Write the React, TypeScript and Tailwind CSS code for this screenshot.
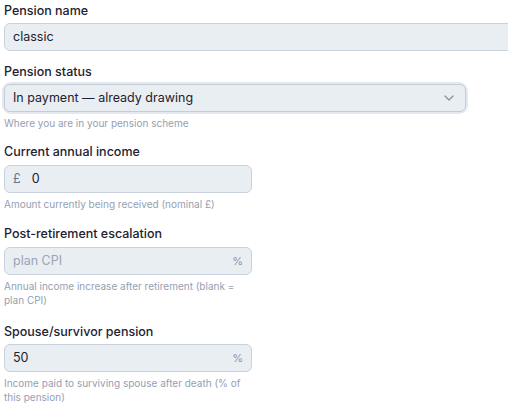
import { ChevronDown } from "lucide-react";

const font = { fontFamily: "Inter, 'Liberation Sans', sans-serif" };

function Label({ children }: { children: React.ReactNode }) {
  return <label className="block text-[12.5px] font-medium leading-4 text-[#1d2130]">{children}</label>;
}

function Help({ children }: { children: React.ReactNode }) {
  return <p className="mt-1 w-[250px] text-[10px] leading-[14px] text-[#94a0b3]">{children}</p>;
}

const box =
  "flex h-7 items-center rounded-md border border-[#c9d1dc] bg-[#e9eef3] px-2 text-[12.5px] text-[#1d2130]";

export default function App() {
  return (
    <div className="h-[408px] w-[508px] overflow-hidden bg-white" style={font}>
      <div className="pl-1 pt-[3px]">
        <div className="mb-[13px]">
          <Label>Pension name</Label>
          <div className={`${box} mt-1 w-[540px]`}>classic</div>
        </div>

        <div className="mb-[14px]">
          <Label>Pension status</Label>
          <div className="mt-1 w-[462px] rounded-[7px] ring-2 ring-[#e4e9f0]">
            <div className="flex h-7 items-center justify-between rounded-md border border-[#c3ccd9] bg-[#e9eef3] px-2 text-[12.5px] text-[#1d2130]">
              <span>In payment — already drawing</span>
              <ChevronDown className="h-4 w-4 text-[#8794a8]" strokeWidth={2} />
            </div>
          </div>
          <Help>Where you are in your pension scheme</Help>
        </div>

        <div className="mb-[15px]">
          <Label>Current annual income</Label>
          <div className={`${box} mt-[5px] w-[248px] gap-[11px]`}>
            <span className="text-[#6b7587]">£</span>
            <span>0</span>
          </div>
          <Help>Amount currently being received (nominal £)</Help>
        </div>

        <div className="mb-[17px]">
          <Label>Post-retirement escalation</Label>
          <div className={`${box} mt-[5px] w-[248px] justify-between`}>
            <span className="text-[#9aa5b6]">plan CPI</span>
            <span className="text-[11px] text-[#8a95a8]">%</span>
          </div>
          <Help>Annual income increase after retirement (blank = plan CPI)</Help>
        </div>

        <div>
          <Label>Spouse/survivor pension</Label>
          <div className={`${box} mt-1 w-[248px] justify-between`}>
            <span>50</span>
            <span className="text-[11px] text-[#8a95a8]">%</span>
          </div>
          <Help>Income paid to surviving spouse after death (% of this pension)</Help>
        </div>
      </div>
    </div>
  );
}
